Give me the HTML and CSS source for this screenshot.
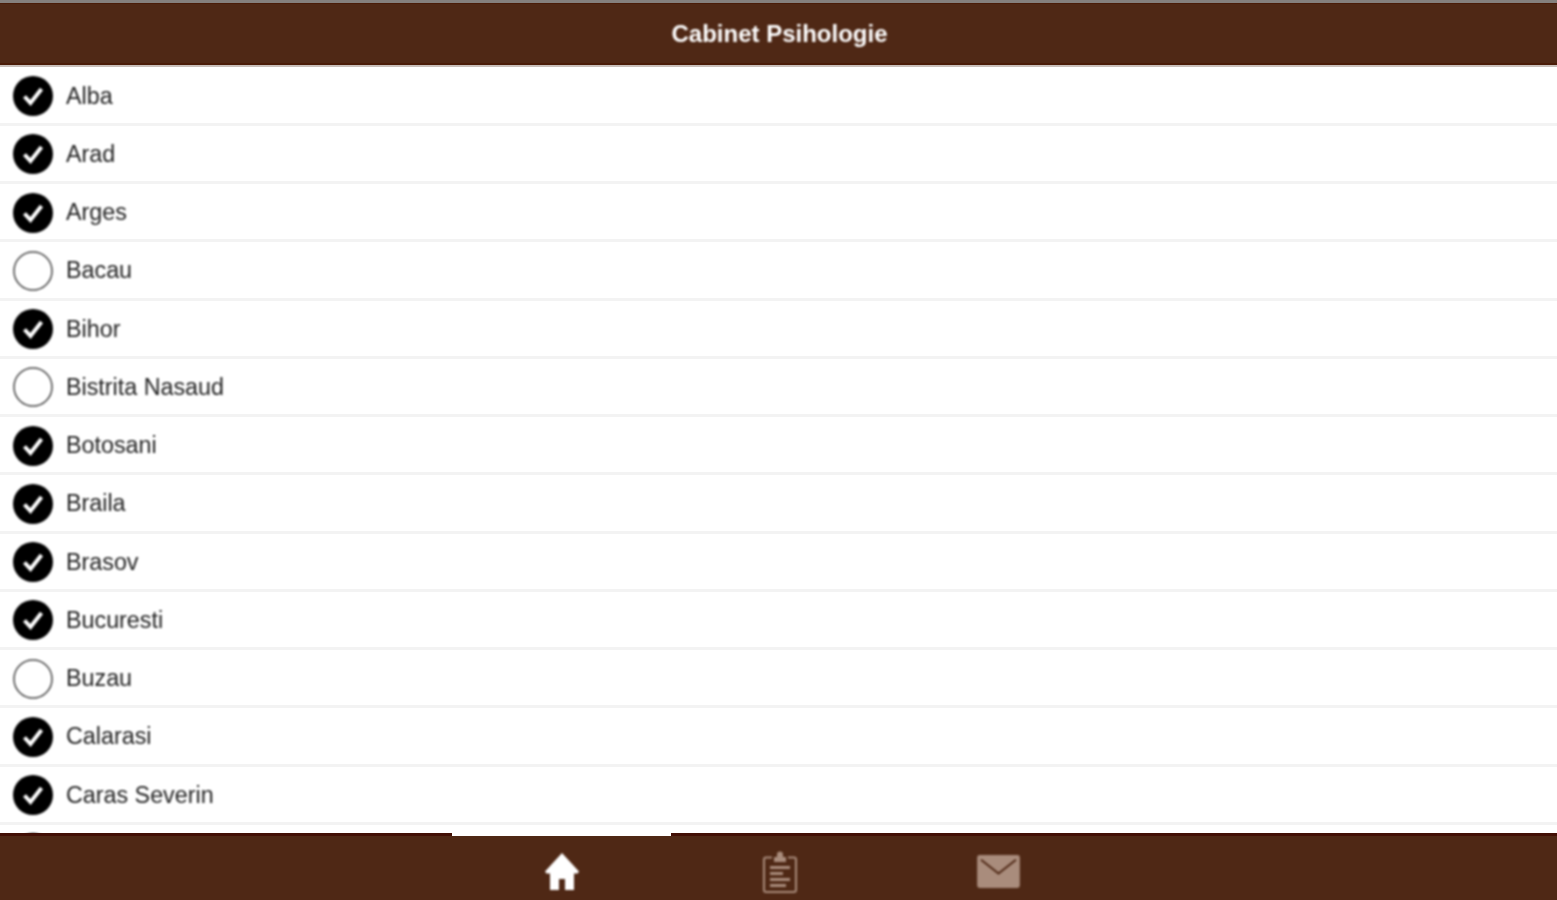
FILE: index.html
```html
<!DOCTYPE html>
<html lang="en">
<head>
    <meta charset="UTF-8">
    <meta name="viewport" content="width=device-width, initial-scale=1.0">
    <title>Cabinet Psihologie</title>
    <link rel="stylesheet" href="styles.css">
</head>
<body>
    <svg class="defs" width="0" height="0">
        <symbol id="on" viewBox="0 0 40 40">
            <circle cx="20" cy="20" r="20" fill="#000"/>
            <path d="M11.500 20.500l6 6.500L28.500 13" fill="none" stroke="#fff" stroke-width="4"/>
        </symbol>
        <symbol id="off" viewBox="0 0 40 40">
            <circle cx="20" cy="20" r="19" fill="#fff" stroke="#444" stroke-width="1.500"/>
        </symbol>
    </svg>

    <header class="topbar"><span class="soft">Cabinet Psihologie</span></header>

    <ul class="list">
        <li class="row"><svg class="mark soft"><use href="#on"/></svg><span class="soft">Alba</span></li>
        <li class="row"><svg class="mark soft"><use href="#on"/></svg><span class="soft">Arad</span></li>
        <li class="row"><svg class="mark soft"><use href="#on"/></svg><span class="soft">Arges</span></li>
        <li class="row"><svg class="mark soft"><use href="#off"/></svg><span class="soft">Bacau</span></li>
        <li class="row"><svg class="mark soft"><use href="#on"/></svg><span class="soft">Bihor</span></li>
        <li class="row"><svg class="mark soft"><use href="#off"/></svg><span class="soft">Bistrita Nasaud</span></li>
        <li class="row"><svg class="mark soft"><use href="#on"/></svg><span class="soft">Botosani</span></li>
        <li class="row"><svg class="mark soft"><use href="#on"/></svg><span class="soft">Braila</span></li>
        <li class="row"><svg class="mark soft"><use href="#on"/></svg><span class="soft">Brasov</span></li>
        <li class="row"><svg class="mark soft"><use href="#on"/></svg><span class="soft">Bucuresti</span></li>
        <li class="row"><svg class="mark soft"><use href="#off"/></svg><span class="soft">Buzau</span></li>
        <li class="row"><svg class="mark soft"><use href="#on"/></svg><span class="soft">Calarasi</span></li>
        <li class="row"><svg class="mark soft"><use href="#on"/></svg><span class="soft">Caras Severin</span></li>
        <li class="row"><svg class="mark soft"><use href="#on"/></svg></li>
    </ul>

    <nav class="tabs">
        <a class="tab active">
            <svg class="icon-home soft" viewBox="0 0 34 38">
                <path d="M17 0L0 18.500l1.500 2H5V37h9V26h6v11h9V20.500h3.500l1.500-2z" fill="#fff"/>
            </svg>
        </a>
        <a class="tab">
            <svg class="icon-clip soft" viewBox="0 0 34 42">
                <path d="M11 11V6h3V3.500a3 3 0 0 1 6 0V6h3v5z" fill="#a98c7c"/>
                <path d="M9 6.500H3a2 2 0 0 0-2 2V39a2 2 0 0 0 2 2h28a2 2 0 0 0 2-2V8.500a2 2 0 0 0-2-2h-6" fill="none" stroke="#a98c7c" stroke-width="2"/>
                <path d="M7 15h20v3H7zM7 21h13v3H7zM7 27h20v3H7zM7 33h16v3H7z" fill="#a98c7c"/>
            </svg>
        </a>
        <a class="tab">
            <svg class="icon-mail soft" viewBox="0 0 44 34">
                <rect width="44" height="34" rx="2.500" fill="#a98c7c"/>
                <path d="M4 5l18 14L40 5" fill="none" stroke="#4f2815" stroke-width="2"/>
            </svg>
        </a>
    </nav>
</body>
</html>
```

FILE: styles.css
```css
* {
    box-sizing: border-box;
}

html, body {
    height: 100%;
}

body {
    margin: 0;
    overflow: hidden;
    display: flex;
    flex-direction: column;
    font-family: 'Liberation Sans', Arial, sans-serif;
    background: #fff;
}

.defs {
    position: absolute;
}

.soft {
    filter: blur(0.8px);
}

.topbar {
    flex: none;
    height: 67px;
    padding: 0 0 1px 2px;
    display: flex;
    align-items: center;
    justify-content: center;
    background: #4f2815;
    border-top: 3px solid #85807d;
    border-bottom: 2px solid #c9c0bb;
    box-shadow: inset 0 1px #4a1c08, inset 0 -2px #4a1c08;
    color: #fff;
    font-size: 24px;
    font-weight: bold;
}

.list {
    flex: 1;
    min-height: 0;
    margin: 0;
    padding: 0.5px 0 0;
    overflow: hidden;
    list-style: none;
}

.row {
    height: 58.25px;
    padding: 2px 0 0 13px;
    display: flex;
    align-items: center;
    gap: 13px;
    border-bottom: 3px solid #f3f3f3;
    color: #222;
    font-size: 23.3px;
}

.mark {
    flex: none;
    width: 40px;
    height: 40px;
}

.tabs {
    flex: none;
    height: 67px;
    padding-left: 4px;
    display: flex;
    justify-content: center;
    background: #4f2815;
    border-top: 3px solid #420f05;
}

.tab {
    width: 219px;
    display: flex;
    align-items: center;
    justify-content: center;
    padding-top: 7px;
}

.tab.active {
    margin-top: -3px;
    padding-top: 11px;
    background: linear-gradient(#fff 3px, transparent 3px);
    border-radius: 0 0 3px 3px;
}

.icon-home {
    width: 34px;
    height: 38px;
}

.icon-clip {
    width: 34px;
    height: 42px;
    margin-left: -2px;
}

.icon-mail {
    width: 43px;
    height: 33px;
    margin-left: -2px;
}
```
